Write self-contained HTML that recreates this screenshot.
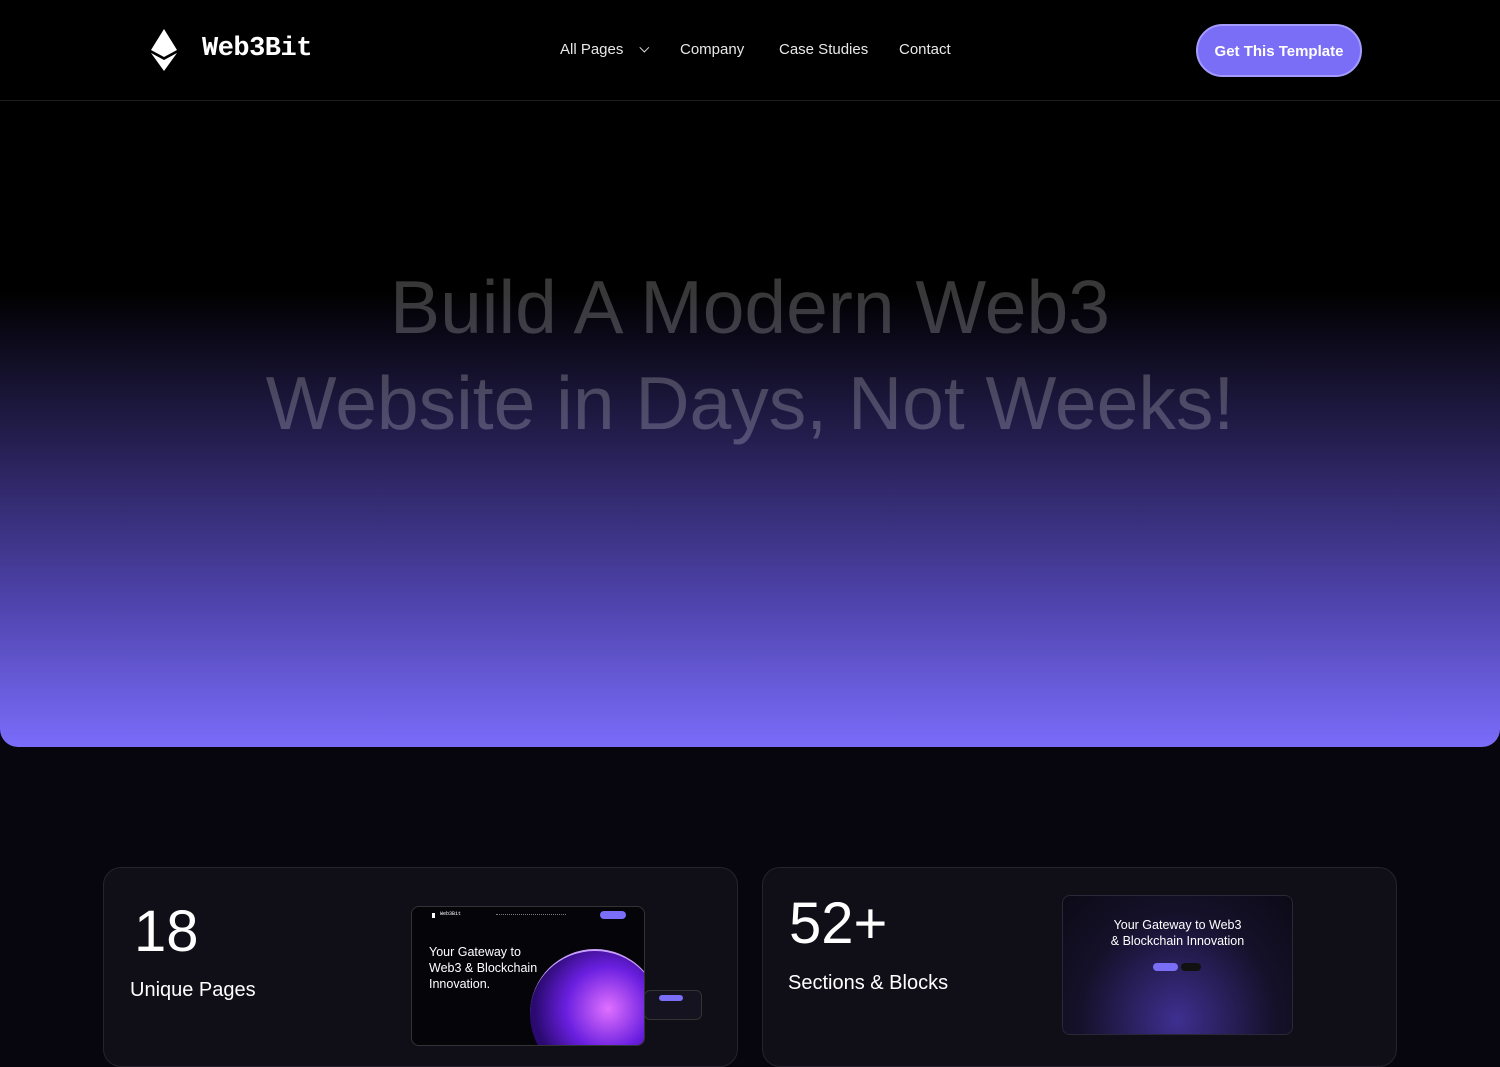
<!DOCTYPE html>
<html><head><meta charset="utf-8"><style>
*{margin:0;padding:0;box-sizing:border-box}
body{width:1500px;height:1000px;overflow:hidden;background:#07050d;font-family:"Liberation Sans",sans-serif;color:#fff;position:relative}
.nav{position:absolute;top:0;left:0;width:1500px;height:101px;background:#000;border-bottom:1px solid #1c1c1c;z-index:2}
.logo{position:absolute;left:150px;top:29px}
.brand{position:absolute;left:202px;top:34px;font-family:"Liberation Mono",monospace;font-size:27px;font-weight:bold;letter-spacing:-0.5px}
.links{position:absolute;top:41px;font-size:15px;color:#e8e8e8}
.btn{position:absolute;left:1196px;top:24px;width:166px;height:53px;border-radius:27px;background:#7b6ef6;border:2px solid #a49bff;font-size:15px;font-weight:bold;text-align:center;line-height:52px}
.hero{position:absolute;top:101px;left:0;width:1500px;height:646px;border-radius:0 0 18px 18px;background:linear-gradient(#000 0px,#000 190px,#221c4a 330px,#4e43ab 500px,#7b6cfa 646px)}
.h1{position:absolute;top:259px;width:1500px;text-align:center;font-size:75px;line-height:96px;color:rgba(255,255,255,0.22)}
.card{position:absolute;top:867px;width:635px;height:200px;border-radius:18px;background:#100e16;border:1px solid #25232d;overflow:hidden}
.num{position:absolute;font-size:58px;font-weight:300}
.lab{position:absolute;font-size:20px}
</style></head><body>
<div class="nav">
<svg class="logo" width="28" height="42" viewBox="0 0 28 42"><path d="M14 0L1 21L14 28L27 21Z" fill="#fff"/><path d="M1 24L14 42L27 24L14 31Z" fill="#fff"/></svg>
<div class="brand">Web3Bit</div>
<div class="links" style="left:560px">All Pages <span style="display:inline-block;margin-left:10px;width:7px;height:7px;border-right:1.5px solid #ddd;border-bottom:1.5px solid #ddd;transform:rotate(45deg) translateY(-4px)"></span></div>
<div class="links" style="left:680px">Company</div>
<div class="links" style="left:779px">Case Studies</div>
<div class="links" style="left:899px">Contact</div>
<div class="btn">Get This Template</div>
</div>
<div class="hero"></div>
<div class="h1">Build A Modern Web3<br>Website in Days, Not Weeks!</div>

<div class="card" style="left:103px">
<div class="num" style="left:30px;top:30px">18</div>
<div class="lab" style="left:26px;top:111px">Unique Pages</div>
<div style="position:absolute;left:540px;top:122px;width:58px;height:30px;border-radius:6px;background:#151320;border:1px solid #333"><div style="margin:4px 0 0 14px;width:24px;height:6px;border-radius:3px;background:#7b6ef6"></div></div>
<div style="position:absolute;left:307px;top:38px;width:234px;height:140px;border-radius:8px;background:#050409;border:1px solid #333;overflow:hidden">
<div style="position:absolute;left:20px;top:6px;width:3px;height:5px;background:#fff"></div>
<div style="position:absolute;left:28px;top:4px;font-size:5px;font-family:'Liberation Mono',monospace">Web3Bit</div>
<div style="position:absolute;left:84px;top:7px;width:70px;height:1px;border-top:1px dotted #777"></div>
<div style="position:absolute;left:188px;top:4px;width:26px;height:8px;border-radius:4px;background:#7b6ef6"></div>
<div style="position:absolute;left:17px;top:37px;font-size:12.5px;line-height:16px">Your Gateway to<br>Web3 &amp; Blockchain<br>Innovation.</div>
<div style="position:absolute;left:118px;top:42px;width:130px;height:130px;border-radius:50%;background:radial-gradient(circle at 60% 45%,#e070ff,#6a1fe0 40%,#2a0a70 70%);border-top:2px solid #c9a0ff"></div>
</div>
</div>

<div class="card" style="left:762px">
<div class="num" style="left:26px;top:22px">52+</div>
<div class="lab" style="left:25px;top:104px">Sections &amp; Blocks</div>
<div style="position:absolute;left:299px;top:27px;width:231px;height:140px;border-radius:8px;background:radial-gradient(ellipse at 50% 90%,#3e2f90,#15112a 60%,#0c0a16);border:1px solid #2a2838;text-align:center">
<div style="margin-top:21px;font-size:12.5px;line-height:16px">Your Gateway to Web3<br>&amp; Blockchain Innovation</div>
<div style="position:absolute;left:90px;top:67px;width:25px;height:8px;border-radius:4px;background:#7b6ef6"></div>
<div style="position:absolute;left:118px;top:67px;width:20px;height:8px;border-radius:4px;background:#111"></div>
</div>
</div>
</body></html>
